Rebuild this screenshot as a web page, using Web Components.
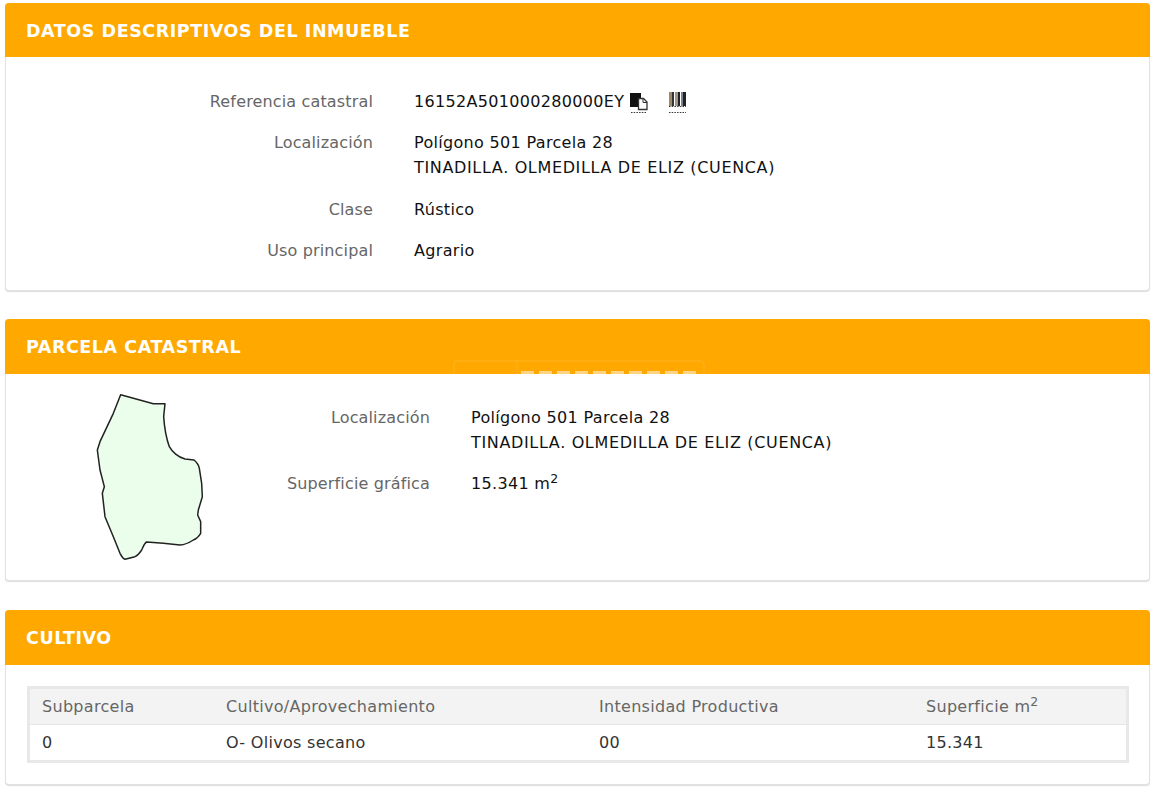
<!DOCTYPE html>
<html lang="es">
  <head>
    <meta charset="utf-8" />
    <title>Datos del inmueble</title>
    <style>
      html, body { margin: 0; background: #fff; }
      body {
        padding: 3px 4px 0 5px;
        font: 16px 'DejaVu Sans', Verdana, sans-serif;
        color: #222;
      }
      .caps { letter-spacing: 0.65px; }
      sup { font-size: 12.5px; line-height: 0; }
    </style>
    <script type="text/javascript">
      class DataPanel extends HTMLElement {
        constructor() {
          super();
          this.attachShadow({ mode: 'open' });
          this.shadowRoot.innerHTML = `
            <style>
              :host {
                display: block;
                position: relative;
                margin-bottom: 28px;
                border: 1px solid #e2e2e2;
                border-top: 0;
                border-radius: 4px;
                box-shadow: 0 1px 1px #ddd;
                background: #fff;
              }
              header {
                height: var(--head-height, 55px);
                padding-left: 21px;
                border-radius: 4px 4px 0 0;
                margin: 0 -1px;
                background: #ffa800;
                color: #fff;
                font: bold 17.5px/56px 'DejaVu Sans', Verdana, sans-serif;
                letter-spacing: 0.56px;
              }
            </style>
            <header></header>
            <div><slot></slot></div>
          `;
        }

        connectedCallback() {
          this.shadowRoot.querySelector('header').textContent =
            this.getAttribute('heading');
        }
      }

      class DataRow extends HTMLElement {
        constructor() {
          super();
          this.attachShadow({ mode: 'open' });
          this.shadowRoot.innerHTML = `
            <style>
              :host {
                display: grid;
                grid-template-columns: var(--label-width, 367px) 1fr;
                column-gap: 41px;
                margin-bottom: var(--row-gap, 16px);
                line-height: 25px;
              }
              .label { text-align: right; color: #666; letter-spacing: 0.15px; }
              .value { color: #111; letter-spacing: 0.32px; }
            </style>
            <div class="label"></div>
            <div class="value"><slot></slot></div>
          `;
        }

        connectedCallback() {
          this.shadowRoot.querySelector('.label').textContent =
            this.getAttribute('label');
        }
      }

      class CopyIcon extends HTMLElement {
        constructor() {
          super();
          this.attachShadow({ mode: 'open' });
          this.shadowRoot.innerHTML = `
            <style>
              :host { display: block; width: 18px; height: 23px; }
              svg { display: block; }
            </style>
            <svg width="18" height="23" viewBox="0 0 18 23">
              <path d="M0 3h11v5H9v9H0z" fill="#111"/>
              <path d="M8.500 8.500h5l3.500 3.500v7.500H8.500z" fill="#fff" stroke="#333" stroke-width="1.300"/>
              <path d="M13 8.500v4h4" fill="none" stroke="#333"/>
              <path d="M1 22.500h16" stroke="#333" stroke-dasharray="1.500 1.200"/>
            </svg>
          `;
        }
      }

      class BarcodeIcon extends HTMLElement {
        constructor() {
          super();
          this.attachShadow({ mode: 'open' });
          this.shadowRoot.innerHTML = `
            <style>
              :host { display: block; width: 18px; height: 23px; }
              svg { display: block; }
            </style>
            <svg width="18" height="23" viewBox="0 0 18 23">
              <path d="M0 2h3v14H0z" fill="#9a8a6a"/>
              <path d="M3 2h2v14H3z" fill="#333"/>
              <path d="M6 2h3v14H6z" fill="#a09888"/>
              <path d="M9 2h2v14H9z" fill="#222"/>
              <path d="M12 2h2v14h-2z" fill="#7a8490"/>
              <path d="M14 2h3v14h-3z" fill="#222"/>
              <path d="M0 16.500h17M0 22.500h17" stroke="#333" stroke-dasharray="1.500 1.200"/>
            </svg>
          `;
        }
      }

      class ParcelShape extends HTMLElement {
        constructor() {
          super();
          this.attachShadow({ mode: 'open' });
          this.shadowRoot.innerHTML = `
            <style>
              :host { display: block; width: 150px; height: 190px; }
              svg { display: block; }
            </style>
            <svg width="150" height="190" viewBox="0 0 450 570">
              <path fill="#ebfdeb" stroke="#222" stroke-width="4.500" stroke-linejoin="round"
                d="M152 44L250 71L285 71L281 110C283 140 285 165 298 200C306 215 325 232 345 237L372 240C382 248 386 255 388 265L395 310L397 350L385 390L383 405L392 425L392 460C385 472 378 477 370 480C355 490 345 494 330 495L280 490L230 486C222 490 218 505 215 510C207 522 200 528 195 530L165 538C158 535 154 528 150 520L130 470L105 410L97 340L103 320L90 270L82 210L90 185L130 100Z"/>
            </svg>
          `;
        }
      }

      class FaintStamp extends HTMLElement {
        constructor() {
          super();
          this.attachShadow({ mode: 'open' });
          this.shadowRoot.innerHTML = `
            <style>
              :host { display: block; position: absolute; left: 447px; top: 41px; width: 252px; height: 14px; overflow: hidden; pointer-events: none; }
              svg { display: block; }
              .bumps { filter: blur(0.7px); }
            </style>
            <svg width="252" height="14" viewBox="0 0 252 14">
              <path d="M1 14V4q0-3 3-3h244q3 0 3 3v10" fill="none" stroke="#fff" stroke-opacity=".14"/>
              <path d="M64 1v13" stroke="#fff" stroke-opacity=".1"/>
              <path class="bumps" d="M68 13h175" stroke="#fff" stroke-opacity=".5" stroke-width="4" stroke-dasharray="13 5"/>
            </svg>
          `;
        }
      }

      class CropTable extends HTMLElement {
        constructor() {
          super();
          this.attachShadow({ mode: 'open' });
          this.shadowRoot.innerHTML = `
            <style>
              :host {
                display: block;
                margin: 21px 20px 21px 21px;
                border: 3px solid #e8e8e8;
                letter-spacing: 0.3px;
              }
              table { width: 100%; border-collapse: collapse; table-layout: fixed; }
              th, td { padding: 1px 0 0 12px; text-align: left; font-weight: normal; height: 34px; line-height: 20px; }
              th { background: #f3f3f3; color: #666; border-bottom: 1px solid #e6e6e6; }
              td { color: #333; }
              sup { font-size: 12.5px; line-height: 0; }
            </style>
            <table>
              <colgroup>
                <col style="width: 184px" />
                <col style="width: 373px" />
                <col style="width: 327px" />
                <col />
              </colgroup>
              <tr>
                <th>Subparcela</th>
                <th>Cultivo/Aprovechamiento</th>
                <th>Intensidad Productiva</th>
                <th>Superficie m<sup>2</sup></th>
              </tr>
              <tr>
                <td>0</td>
                <td>O- Olivos secano</td>
                <td>00</td>
                <td>15.341</td>
              </tr>
            </table>
          `;
        }
      }

      customElements.define('data-panel', DataPanel);
      customElements.define('data-row', DataRow);
      customElements.define('copy-icon', CopyIcon);
      customElements.define('barcode-icon', BarcodeIcon);
      customElements.define('parcel-shape', ParcelShape);
      customElements.define('faint-stamp', FaintStamp);
      customElements.define('crop-table', CropTable);
    </script>
  </head>
  <body>
    <data-panel heading="DATOS DESCRIPTIVOS DEL INMUEBLE" style="--head-height: 54px">
      <div style="padding: 32px 0 11px">
        <data-row label="Referencia catastral"><span style="display: flex; align-items: center; height: 25px">16152A501000280000EY<copy-icon style="margin-left: 6px"></copy-icon><barcode-icon style="margin-left: 21px"></barcode-icon></span></data-row>
        <data-row label="Localización" style="--row-gap: 17px">Polígono 501 Parcela 28<br /><span class="caps">TINADILLA. OLMEDILLA DE ELIZ (CUENCA)</span></data-row>
        <data-row label="Clase">Rústico</data-row>
        <data-row label="Uso principal">Agrario</data-row>
      </div>
    </data-panel>
    <data-panel heading="PARCELA CATASTRAL" style="margin-bottom: 29px">
      <faint-stamp></faint-stamp>
      <div style="display: flex; padding-top: 6px; height: 200px">
        <parcel-shape style="margin-left: 64px"></parcel-shape>
        <div style="--label-width: 210px; padding-top: 25px">
          <data-row label="Localización">Polígono 501 Parcela 28<br /><span class="caps">TINADILLA. OLMEDILLA DE ELIZ (CUENCA)</span></data-row>
          <data-row label="Superficie gráfica">15.341 m<sup>2</sup></data-row>
        </div>
      </div>
    </data-panel>
    <data-panel heading="CULTIVO">
      <crop-table></crop-table>
    </data-panel>
  </body>
</html>
